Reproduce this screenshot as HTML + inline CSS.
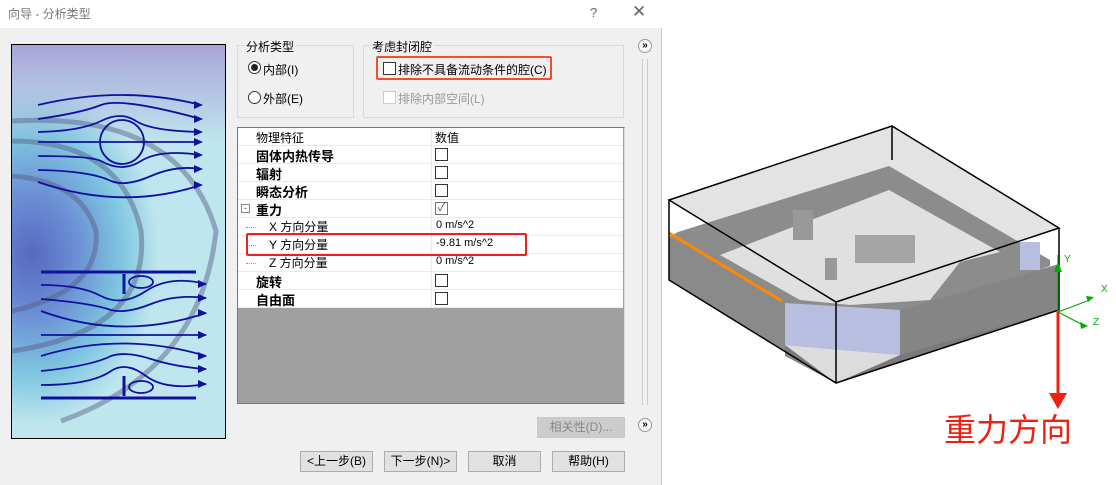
<!DOCTYPE html>
<html><head><meta charset="utf-8"><style>
*{margin:0;padding:0;box-sizing:border-box}
body{width:1116px;height:485px;background:#fff;position:relative;overflow:hidden;font-family:"Liberation Sans","Noto Sans CJK SC",sans-serif;font-size:12px;color:#000}
.a{position:absolute}
.dlg{left:0;top:0;width:662px;height:485px;background:#f0f0f0;border-right:1px solid #c8c8c8}
.title{left:0;top:0;width:662px;height:28px;background:#fff;color:#777;font-size:12px;padding:5px 8px}
.grp{border:1px solid #d9d9d9}
.lbl{background:#f0f0f0;padding:0 2px;font-size:12px}
.cb{width:13px;height:13px;border:1px solid #333;background:#fff}
.row{left:238px;width:385px;height:18px;border-bottom:1px solid #eaeaea;background:#fff}
.row .n{position:absolute;left:18px;top:0px;font-weight:bold;font-size:13px}
.row .s{position:absolute;left:31px;top:0px;font-size:12px}
.row .v{position:absolute;left:198px;top:1px;font-size:11px}
.row .c{position:absolute;left:197px;top:2px}
.row .sep{position:absolute;left:193px;top:0;width:1px;height:18px;background:#eaeaea}
.btn{height:21px;border:1px solid #adadad;background:#e1e1e1;text-align:center;font-size:12px;line-height:19px}
.dd{position:absolute;left:8px;top:9px;width:10px;border-top:1px dotted #999}
</style></head><body>
<div class="a dlg"></div>
<div class="a title">向导 - 分析类型</div>
<div class="a" style="left:590px;top:5px;color:#666;font-size:13px">?</div>
<div class="a" style="left:632px;top:2px;color:#666;font-size:17px">✕</div>

<!-- image -->
<div class="a" style="left:11px;top:44px;width:215px;height:395px;border:1px solid #000;overflow:hidden;background:linear-gradient(180deg,#a8a5d8 0%,rgba(168,165,216,0) 25%),radial-gradient(ellipse 150px 200px at 20px 210px,#5868c0 0%,#6b8fd4 30%,#7fc6e0 60%,#bfe6ee 85%),#c2e6ee">
<svg class="a" style="left:0;top:0" width="215" height="395" viewBox="11 44 215 395" fill="none">
<g stroke="#555a80" stroke-width="5" opacity="0.45"><path d="M11,140 Q120,140 140,230 Q150,330 11,350"/><path d="M11,175 Q80,180 95,230 Q100,290 11,310"/><path d="M11,120 Q180,110 215,230 Q200,370 60,420"/></g>
<g stroke="#1010a0" stroke-width="1.8">
<path d="M37,104 Q122,84 200,104"/><path d="M37,118 Q80,112 100,104 T200,118"/><path d="M37,131 Q80,130 100,120 Q120,110 135,120 T200,131"/><path d="M37,141 H200"/><path d="M37,155 Q90,155 100,160 Q121,172 140,160 T200,154"/><path d="M37,169 Q90,170 110,180 Q125,186 150,175 T200,168"/><path d="M37,181 Q121,210 200,184"/>
<circle cx="121" cy="141" r="22"/>
<path d="M40,284 Q80,284 100,295 Q121,306 145,290 T205,283"/><path d="M40,298 Q90,302 110,309 Q125,313 150,303 T205,297"/><path d="M40,310 Q121,340 205,312"/><path d="M40,334 H205"/><path d="M40,355 Q121,330 205,355"/><path d="M40,370 Q90,365 110,355 Q125,350 150,358 T205,368"/><path d="M40,384 Q90,384 110,370 Q125,360 145,375 T205,383"/>
<path d="M40,271 H195 M40,397 H195" stroke-width="3"/><path d="M123,273 V293 M123,375 V395" stroke-width="3"/>
<ellipse cx="140" cy="281" rx="12" ry="6"/><ellipse cx="140" cy="386" rx="12" ry="6"/></g>
<g fill="#1010a0" stroke="none"><path d="M193,100l9,4-9,4z M193,114l9,4-9,4z M193,127l9,4-9,4z M193,137l9,4-9,4z M193,150l9,4-9,4z M193,164l9,4-9,4z M193,180l9,4-9,4z M197,279l9,4-9,4z M197,293l9,4-9,4z M197,308l9,4-9,4z M197,330l9,4-9,4z M197,351l9,4-9,4z M197,364l9,4-9,4z M197,379l9,4-9,4z"/></g>
</svg></div>

<!-- groups -->
<div class="a grp" style="left:237px;top:45px;width:117px;height:73px"></div>
<div class="a lbl" style="left:244px;top:38px">分析类型</div>
<div class="a" style="left:248px;top:61px;width:13px;height:13px;border:1px solid #333;border-radius:50%;background:#fff"><div style="margin:2px;width:7px;height:7px;border-radius:50%;background:#222"></div></div>
<div class="a" style="left:263px;top:61px">内部(I)</div>
<div class="a" style="left:248px;top:91px;width:13px;height:13px;border:1px solid #333;border-radius:50%;background:#fff"></div>
<div class="a" style="left:263px;top:90px">外部(E)</div>
<div class="a grp" style="left:363px;top:45px;width:261px;height:73px"></div>
<div class="a lbl" style="left:370px;top:38px">考虑封闭腔</div>
<div class="a" style="left:376px;top:56px;width:176px;height:24px;border:2px solid #f05030;border-radius:2px"></div>
<div class="a cb" style="left:383px;top:62px"></div>
<div class="a" style="left:398px;top:61px">排除不具备流动条件的腔(C)</div>
<div class="a cb" style="left:383px;top:91px;border-color:#ccc"></div>
<div class="a" style="left:398px;top:90px;color:#999">排除内部空间(L)</div>

<!-- table -->
<div class="a" style="left:237px;top:127px;width:388px;height:277px;border:1px solid #777;border-right-color:#ddd;background:#a0a0a0"></div>
<div class="a row" style="top:128px"><span class="a" style="left:18px;top:1px">物理特征</span><span class="a" style="left:197px;top:1px">数值</span><i class="sep"></i></div>
<div class="a row" style="top:146px"><b class="n">固体内热传导</b><i class="sep"></i><i class="cb c"></i></div>
<div class="a row" style="top:164px"><b class="n">辐射</b><i class="sep"></i><i class="cb c"></i></div>
<div class="a row" style="top:182px"><b class="n">瞬态分析</b><i class="sep"></i><i class="cb c"></i></div>
<div class="a row" style="top:200px"><span class="a" style="left:3px;top:4px;width:9px;height:9px;border:1px solid #888;font-size:9px;line-height:6px;text-align:center;color:#333">-</span><b class="n">重力</b><i class="sep"></i><i class="cb c" style="border-color:#777;font-size:11px;line-height:10px;text-align:center;color:#555;font-style:normal">✓</i></div>
<div class="a row" style="top:218px"><i class="dd"></i><span class="s">X 方向分量</span><i class="sep"></i><span class="v">0 m/s^2</span></div>
<div class="a row" style="top:236px"><i class="dd"></i><span class="s">Y 方向分量</span><i class="sep"></i><span class="v">-9.81 m/s^2</span></div>
<div class="a row" style="top:254px"><i class="dd"></i><span class="s">Z 方向分量</span><i class="sep"></i><span class="v">0 m/s^2</span></div>
<div class="a row" style="top:272px"><b class="n">旋转</b><i class="sep"></i><i class="cb c"></i></div>
<div class="a row" style="top:290px"><b class="n">自由面</b><i class="sep"></i><i class="cb c"></i></div>
<div class="a" style="left:246px;top:233px;width:281px;height:23px;border:2px solid #f02020;border-radius:2px"></div>

<!-- scrollbar & >> -->
<div class="a" style="left:642px;top:59px;width:6px;height:346px;border-left:1px solid #ccc;border-right:1px solid #ccc"></div>
<div class="a" style="left:638px;top:39px;width:14px;height:14px;border:1px solid #999;border-radius:50%;background:#f8f8f8;font-size:10px;line-height:11px;text-align:center;font-weight:bold">»</div>
<div class="a" style="left:638px;top:418px;width:14px;height:14px;border:1px solid #999;border-radius:50%;background:#f8f8f8;font-size:10px;line-height:11px;text-align:center;font-weight:bold">»</div>

<div class="a btn" style="left:537px;top:417px;width:88px;color:#888;border-color:#c8c8c8;background:#ccc">相关性(D)...</div>
<div class="a btn" style="left:300px;top:451px;width:73px">&lt;上一步(B)</div>
<div class="a btn" style="left:384px;top:451px;width:73px">下一步(N)&gt;</div>
<div class="a btn" style="left:468px;top:451px;width:73px">取消</div>
<div class="a btn" style="left:552px;top:451px;width:73px">帮助(H)</div>

<!-- 3D -->
<svg class="a" style="left:0;top:0" width="1116" height="485">
<polygon points="669,237 836,342 1059,264 1059,310 836,383 669,280" fill="#7a7a7a"/>
<polygon points="669,200 892,126 1059,228 836,302" fill="#e3e3e3"/>
<polygon points="678,232 889,166 1050,260 1050,266 836,340 669,237" fill="#8c8c8c"/>
<polygon points="720,255 889,190 1000,252 960,262 930,300 850,305 800,300" fill="#e0e0e0"/>
<polygon points="785,303 900,310 900,355 785,345" fill="#b8bee0"/>
<polygon points="900,310 1059,264 1059,310 900,355" fill="#858585"/>
<polygon points="669,237 785,303 785,356 836,383 669,280" fill="#8a8a8a"/>
<polygon points="785,345 900,355 836,383" fill="#dcdcdc"/>
<rect x="793" y="210" width="20" height="30" fill="#999"/><rect x="825" y="258" width="12" height="22" fill="#999"/>
<rect x="855" y="235" width="60" height="28" fill="#a5a5a5"/><rect x="1020" y="242" width="20" height="28" fill="#b8bee0"/>
<path d="M669,233 L782,301" stroke="#ff8800" stroke-width="3"/>
<g stroke="#000" stroke-width="1.5" fill="none"><polygon points="669,200 892,126 1059,228 836,302"/><path d="M669,200V280L836,383L1059,310V228M836,302V383M892,126V160"/></g>
<path d="M1058,255V312M1058,312L1090,300M1058,312L1083,325" stroke="#0a0" stroke-width="1.2"/>
<path d="M1054,272l4,-10l4,10z M1086,296l8,1l-6,5z M1080,322l8,4l-7,3z" fill="#0a0"/>
<text x="1064" y="262" font-size="10" fill="#0a0">Y</text><text x="1101" y="292" font-size="10" fill="#0a0">X</text><text x="1093" y="325" font-size="10" fill="#0a0">Z</text>
<path d="M1058,312V400" stroke="#f02010" stroke-width="3"/><path d="M1049,393h18l-9,16z" fill="#f02010"/>
<text x="944" y="441" font-size="32" fill="#f02010" font-family="Noto Sans CJK SC,sans-serif">重力方向</text>
</svg>
</body></html>
